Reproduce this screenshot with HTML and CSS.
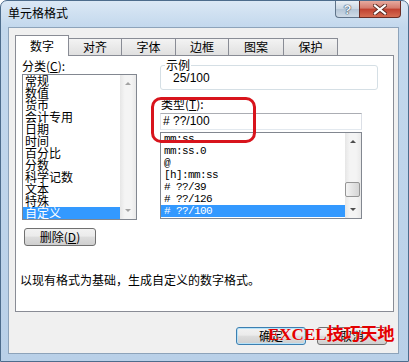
FILE: index.html
```html
<!DOCTYPE html>
<html lang="zh-CN">
<head>
  <meta charset="UTF-8">
  <title>单元格格式</title>
  <link rel="stylesheet" href="styles.css">
</head>
<body>
  <div class="window">
    <div class="titlebar">
      <span class="title">单元格格式</span>
      <div class="caption-btns">
        <span class="cap-help">?</span>
        <span class="cap-close">
          <svg width="14" height="11" viewBox="0 0 14 11">
            <path d="M2 1.5 L12 9.5 M12 1.5 L2 9.5" stroke="#5a2a22" stroke-width="4" stroke-linecap="square"/>
            <path d="M2 1.5 L12 9.5 M12 1.5 L2 9.5" stroke="#fff" stroke-width="2.2" stroke-linecap="square"/>
          </svg>
        </span>
      </div>
    </div>

    <div class="client">
      <div class="tabs">
        <span class="tab active">数字</span>
        <span class="tab w54">对齐</span>
        <span class="tab w55">字体</span>
        <span class="tab w54">边框</span>
        <span class="tab w56">图案</span>
        <span class="tab w55">保护</span>
      </div>

      <div class="panel">
        <div class="top">
          <div class="col-left">
            <div class="label">分类(<u>C</u>):</div>
            <div class="listbox cat">
              <ul class="items">
                <li>常规</li>
                <li>数值</li>
                <li>货币</li>
                <li>会计专用</li>
                <li>日期</li>
                <li>时间</li>
                <li>百分比</li>
                <li>分数</li>
                <li>科学记数</li>
                <li>文本</li>
                <li>特殊</li>
                <li class="sel">自定义</li>
              </ul>
              <div class="vscroll disabled">
                <span class="arr-box"><span class="arr up"></span></span>
                <span class="arr-box"><span class="arr down"></span></span>
              </div>
            </div>
          </div>

          <div class="col-right">
            <fieldset class="sample">
              <legend>示例</legend>
              <div class="sample-val">25/100</div>
            </fieldset>
            <div class="label type-label">类型(<u>T</u>):</div>
            <div class="textbox"># ??/100</div>
            <div class="listbox types">
              <ul class="items">
                <li>mm:ss</li>
                <li>mm:ss.0</li>
                <li>@</li>
                <li>[h]:mm:ss</li>
                <li># ??/39</li>
                <li># ??/126</li>
                <li class="sel"># ??/100</li>
              </ul>
              <div class="vscroll">
                <span class="arr-box"><span class="arr up"></span></span>
                <span class="thumb"></span>
                <span class="arr-box"><span class="arr down"></span></span>
              </div>
            </div>
          </div>
        </div>

        <button class="btn del">删除(<u>D</u>)</button>
        <p class="desc">以现有格式为基础，生成自定义的数字格式。</p>

        <div class="highlight"></div>
      </div>

      <div class="actions">
        <button class="btn default">确定</button>
        <button class="btn">取消</button>
        <span class="watermark">EXCEL技巧天地</span>
      </div>
    </div>
  </div>
</body>
</html>
```

FILE: styles.css
```css
* {
  margin: 0;
  padding: 0;
  box-sizing: border-box;
}

body {
  background: #fff;
  font-family: "Noto Sans CJK SC", sans-serif;
  font-size: 12px;
  color: #000;
}

/* Window frame */
.window {
  width: 409px;
  height: 362px;
  border: 1px solid #4d6c8c;
  border-radius: 7px 7px 0 0;
  background: linear-gradient(180deg, #dbe8f5 0, #c3d8ed 26px, #b9d0e8 100%);
  padding: 0 9px 7px 7px;
  display: flex;
  flex-direction: column;
}

.titlebar {
  height: 26px;
  display: flex;
  justify-content: space-between;
  align-items: flex-start;
}

.title {
  padding-top: 4px;
  line-height: 16px;
  font-size: 12px;
}

.caption-btns {
  display: flex;
  margin-right: -2px;
}

.cap-help,
.cap-close {
  height: 17px;
  display: flex;
  align-items: center;
  justify-content: center;
  border: 1px solid #60748a;
  border-top: none;
}

.cap-help {
  width: 24px;
  border-radius: 0 0 0 4px;
  border-right: none;
  background: linear-gradient(#e9eff5, #c9d6e3 50%, #b4c5d6 51%, #cfdbe7);
  color: #eef3f8;
  font-family: "Liberation Sans", sans-serif;
  font-size: 13px;
  font-weight: bold;
  text-shadow: 0 0 1px #3d4f63, 0 0 1px #3d4f63, 0 0 1px #3d4f63;
}

.cap-close {
  width: 42px;
  border-radius: 0 0 4px 0;
  border-color: #6b2d25;
  background: linear-gradient(#e6aa9f, #d47a6c 45%, #c0402f 50%, #d66d52);
}

/* Client area */
.client {
  flex: 1;
  border: 1px solid #8da3ba;
  background: #f0f0f0;
  padding: 7px 4px 0 6px;
}

.tabs {
  display: flex;
  align-items: flex-end;
  height: 20px;
  position: relative;
  z-index: 1;
}

.tab {
  height: 17px;
  border: 1px solid #898c95;
  border-bottom: none;
  margin-left: -1px;
  background: linear-gradient(#f3f3f3, #e0e0e0);
  text-align: center;
  line-height: 15px;
  font-size: 12px;
}

.tab.active {
  width: 54px;
  height: 21px;
  margin-left: 0;
  margin-bottom: -1px;
  background: #fff;
  line-height: 19px;
}

.w54 { width: 54px; }
.w55 { width: 55px; }
.w56 { width: 56px; }

.panel {
  position: relative;
  width: 379px;
  height: 257px;
  border: 1px solid #898c95;
  background: #fff;
  padding: 3px 0 0 6px;
}

.top {
  display: flex;
  gap: 23px;
}

.col-left {
  width: 115px;
}

.col-right {
  width: 218px;
}

.label {
  height: 14px;
  line-height: 14px;
  margin-bottom: 1px;
  white-space: nowrap;
}

/* List boxes */
.listbox {
  display: flex;
  border: 1px solid #828790;
  background: #fff;
}

.items {
  list-style: none;
  flex: 1;
  overflow: hidden;
}

.items li {
  height: 12px;
  line-height: 12px;
  padding-left: 2px;
  white-space: nowrap;
}

.items li.sel {
  background: #3399ff;
  color: #fff;
}

.cat {
  height: 146px;
}

.types {
  width: 202px;
  height: 87px;
  margin-top: 2px;
}

.types li {
  font-family: "Liberation Mono", monospace;
  font-size: 11px;
  letter-spacing: -0.6px;
  padding-left: 3px;
}

.vscroll {
  width: 16px;
  display: flex;
  flex-direction: column;
  background: linear-gradient(90deg, #e6e6e6, #f4f4f4 30%, #f4f4f4 70%, #e9e9e9);
}

.arr-box {
  height: 17px;
  display: flex;
  align-items: center;
  justify-content: center;
}

.arr-box:last-child {
  margin-top: auto;
}

.arr {
  width: 0;
  height: 0;
  border-left: 3px solid transparent;
  border-right: 3px solid transparent;
}

.arr.up {
  border-bottom: 3px solid #4d4d4d;
}

.arr.down {
  border-top: 3px solid #4d4d4d;
}

.disabled .arr.up {
  border-bottom-color: #a3a3a3;
}

.disabled .arr.down {
  border-top-color: #a3a3a3;
}

.thumb {
  height: 15px;
  margin: 32px 1px 0 0;
  border: 1px solid #959595;
  border-radius: 2px;
  background: linear-gradient(90deg, #f4f4f4, #e4e4e4 50%, #d5d5d5);
}

/* Sample group */
.sample {
  width: 218px;
  border: 1px solid #d5dfe5;
  border-radius: 3px;
  padding: 0 0 4px 4px;
}

.sample legend {
  padding: 0 1px;
  line-height: 12px;
  font-size: 12px;
}

.sample-val {
  padding-left: 8px;
  line-height: 14px;
  font-family: "Liberation Sans", sans-serif;
  font-size: 12px;
}

.type-label {
  margin: 7px 0 0 1px;
}

.textbox {
  width: 202px;
  height: 17px;
  margin-top: 2px;
  border: 1px solid;
  border-color: #abadb3 #dbdfe6 #e3e9ef #e2e3ea;
  padding-left: 2px;
  line-height: 15px;
  font-family: "Liberation Sans", sans-serif;
  font-size: 12px;
}

/* Buttons */
.btn {
  width: 70px;
  height: 18px;
  border: 1px solid #707070;
  border-radius: 3px;
  background: linear-gradient(#f2f2f2 0, #ebebeb 45%, #dddddd 50%, #cfcfcf 100%);
  font-family: "Noto Sans CJK SC", sans-serif;
  font-size: 12px;
  line-height: 16px;
  color: #000;
}

.btn.del {
  width: 72px;
  margin: 8px 0 0 2px;
  display: block;
}

.btn.default {
  border-color: #3c7fb1;
  box-shadow: inset 0 0 0 1px #b7e2f8;
}

.desc {
  margin: 26px 0 0 -2px;
  line-height: 16px;
}

/* Red marker round the type field */
.highlight {
  position: absolute;
  left: 135px;
  top: 41px;
  width: 105px;
  height: 46px;
  border: 3px solid #d8141c;
  border-radius: 10px;
}

.actions {
  position: relative;
  display: flex;
  justify-content: flex-end;
  gap: 11px;
  height: 18px;
  margin: 15px 7px 0 0;
}

.watermark {
  position: absolute;
  left: 253px;
  top: -2px;
  color: #e30000;
  font-family: "Liberation Serif", "Noto Sans CJK SC", serif;
  font-size: 17px;
  font-weight: bold;
  line-height: 20px;
  white-space: nowrap;
  text-shadow: 0 0 1px #fff;
}
```
